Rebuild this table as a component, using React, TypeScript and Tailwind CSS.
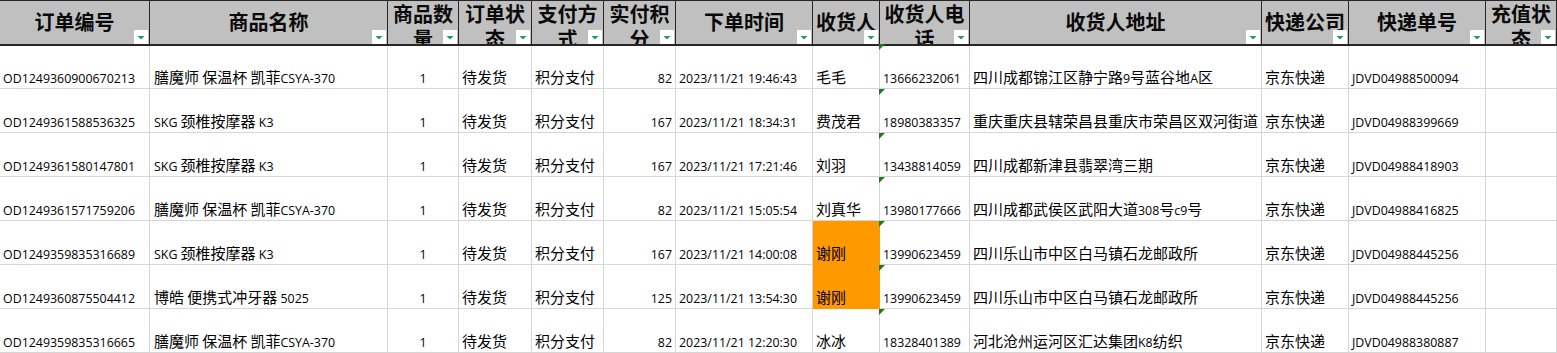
import React from "react";

type Row = {
  id: string;
  name: string;
  qty: string;
  status: string;
  pay: string;
  pts: string;
  time: string;
  who: string;
  phone: string;
  addr: string;
  exp: string;
  no: string;
  orange?: boolean;
};

const rows: Row[] = [
  { id: "OD1249360900670213", name: "膳魔师 保温杯 凯菲CSYA-370", qty: "1", status: "待发货", pay: "积分支付", pts: "82", time: "2023/11/21 19:46:43", who: "毛毛", phone: "13666232061", addr: "四川成都锦江区静宁路9号蓝谷地A区", exp: "京东快递", no: "JDVD04988500094" },
  { id: "OD1249361588536325", name: "SKG 颈椎按摩器 K3", qty: "1", status: "待发货", pay: "积分支付", pts: "167", time: "2023/11/21 18:34:31", who: "费茂君", phone: "18980383357", addr: "重庆重庆县辖荣昌县重庆市荣昌区双河街道", exp: "京东快递", no: "JDVD04988399669" },
  { id: "OD1249361580147801", name: "SKG 颈椎按摩器 K3", qty: "1", status: "待发货", pay: "积分支付", pts: "167", time: "2023/11/21 17:21:46", who: "刘羽", phone: "13438814059", addr: "四川成都新津县翡翠湾三期", exp: "京东快递", no: "JDVD04988418903" },
  { id: "OD1249361571759206", name: "膳魔师 保温杯 凯菲CSYA-370", qty: "1", status: "待发货", pay: "积分支付", pts: "82", time: "2023/11/21 15:05:54", who: "刘真华", phone: "13980177666", addr: "四川成都武侯区武阳大道308号c9号", exp: "京东快递", no: "JDVD04988416825" },
  { id: "OD1249359835316689", name: "SKG 颈椎按摩器 K3", qty: "1", status: "待发货", pay: "积分支付", pts: "167", time: "2023/11/21 14:00:08", who: "谢刚", phone: "13990623459", addr: "四川乐山市中区白马镇石龙邮政所", exp: "京东快递", no: "JDVD04988445256", orange: true },
  { id: "OD1249360875504412", name: "博皓 便携式冲牙器 5025", qty: "1", status: "待发货", pay: "积分支付", pts: "125", time: "2023/11/21 13:54:30", who: "谢刚", phone: "13990623459", addr: "四川乐山市中区白马镇石龙邮政所", exp: "京东快递", no: "JDVD04988445256", orange: true },
  { id: "OD1249359835316665", name: "膳魔师 保温杯 凯菲CSYA-370", qty: "1", status: "待发货", pay: "积分支付", pts: "82", time: "2023/11/21 12:20:30", who: "冰冰", phone: "18328401389", addr: "河北沧州运河区汇达集团K8纺织", exp: "京东快递", no: "JDVD04988380887" },
];

const headers: string[][] = [
  ["订单编号"],
  ["商品名称"],
  ["商品数", "量"],
  ["订单状", "态"],
  ["支付方", "式"],
  ["实付积", "分"],
  ["下单时间"],
  ["收货人"],
  ["收货人电", "话"],
  ["收货人地址"],
  ["快递公司"],
  ["快递单号"],
  ["充值状", "态"],
];

const GRID =
  "grid grid-cols-[150px_238px_71px_73px_72px_72px_137px_67px_90px_292px_87px_137px_71px]";

function Txt({ t }: { t: string }) {
  const parts = t.split(/([\u4e00-\u9fff]+)/);
  return (
    <>
      {parts.map((s, i) =>
        /[\u4e00-\u9fff]/.test(s) ? (
          <span key={i} className="text-[15px]">
            {s}
          </span>
        ) : (
          <span key={i}>{s}</span>
        )
      )}
    </>
  );
}

function FilterBtn() {
  return (
    <div className="absolute right-[1px] bottom-0 w-[14px] h-[14px] bg-white">
      <svg width="14" height="14" viewBox="0 0 14 14">
        <polygon points="3.5,6 10.5,6 7,9.5" fill="#1f9d5c" />
      </svg>
    </div>
  );
}

function HeaderCell({ lines }: { lines: string[] }) {
  const wrapped = lines.length > 1;
  return (
    <div
      className={
        "relative overflow-hidden border-r border-[#262626] flex flex-col items-center " +
        (wrapped ? "pt-[1px]" : "pt-[9px]")
      }
    >
      {lines.map((l, i) => (
        <div key={i} className="leading-[25px] text-[20px] font-bold whitespace-nowrap text-[#0a0a0a]">
          {l}
        </div>
      ))}
      <FilterBtn />
    </div>
  );
}

function Cell({
  children,
  align = "left",
  orange = false,
  extra = "",
}: {
  children?: React.ReactNode;
  align?: "left" | "center" | "right";
  orange?: boolean;
  extra?: string;
}) {
  const a =
    align === "center" ? "justify-center" : align === "right" ? "justify-end pr-[3px]" : "justify-start pl-[3px]";
  const b = orange ? "bg-[#ff9900] border-[#ff9900]" : "border-[#d6d6d6]";
  return (
    <div className={"relative flex items-end overflow-visible whitespace-nowrap border-r border-b " + a + " " + b + " " + extra}>
      <div className="leading-[18px]">{children}</div>
    </div>
  );
}

function Tri({ first }: { first: boolean }) {
  return (
    <div
      className={
        "absolute left-[-1px] w-[6px] h-[6px] bg-[#1a7f1a] [clip-path:polygon(0_0,100%_0,0_100%)] " +
        (first ? "top-[-2px]" : "top-0")
      }
    />
  );
}

export default function App() {
  return (
    <div
      className="w-[1557px] h-[353px] overflow-hidden bg-white text-black text-[12.4px]"
      style={{ fontFamily: "'Open Sans','Noto Sans CJK SC',sans-serif" }}
    >
      <div className={GRID + " h-[46px] bg-[#c0c0c0] border-t border-b-2 border-[#262626]"}>
        {headers.map((h, i) => (
          <HeaderCell key={i} lines={h} />
        ))}
      </div>
      {rows.map((r, i) => (
        <div key={i} className={GRID + (i === 0 ? " h-[43px]" : " h-[44px]")}>
          <Cell>
            <Txt t={r.id} />
          </Cell>
          <Cell extra="pl-[4px]">
            <Txt t={r.name} />
          </Cell>
          <Cell align="center">
            <Txt t={r.qty} />
          </Cell>
          <Cell>
            <Txt t={r.status} />
          </Cell>
          <Cell>
            <Txt t={r.pay} />
          </Cell>
          <Cell align="right">
            <Txt t={r.pts} />
          </Cell>
          <Cell>
            <Txt t={r.time} />
          </Cell>
          <Cell orange={r.orange}>
            <Txt t={r.who} />
          </Cell>
          <Cell>
            <Tri first={i === 0} />
            <Txt t={r.phone} />
          </Cell>
          <Cell>
            <Txt t={r.addr} />
          </Cell>
          <Cell>
            <Txt t={r.exp} />
          </Cell>
          <Cell>
            <Txt t={r.no} />
          </Cell>
          <Cell />
        </div>
      ))}
    </div>
  );
}
